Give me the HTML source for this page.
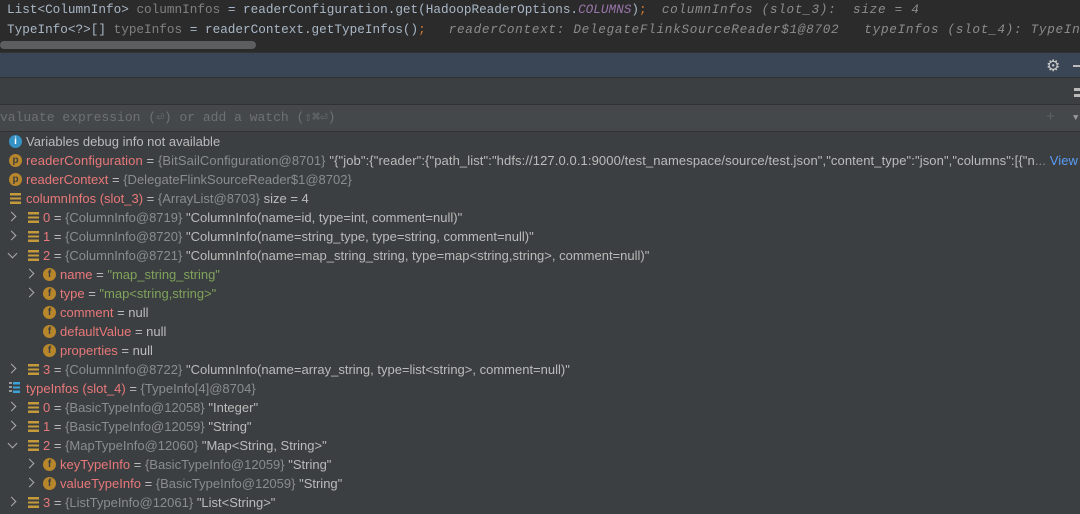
<!DOCTYPE html><html><head><style>
body{margin:0;width:1080px;height:514px;overflow:hidden;background:#3c3f41;font-family:"Liberation Sans",sans-serif;position:relative}
.code{position:absolute;left:0;top:0;width:1080px;height:52px;overflow:hidden;background:#2b2b2b;font-family:"Liberation Mono",monospace;font-size:12.7px;color:#a9b7c6;white-space:pre}
.code div{position:absolute;left:7px}
.g{color:#808080}.i{font-style:italic;color:#8c8c8c;letter-spacing:.7px}.o{color:#cc7832}.p{color:#9876aa;font-style:italic}
.r{position:absolute;height:19px;line-height:19px;font-size:13px;color:#bbbbbb;white-space:nowrap}
.n{color:#e8787a}.v{color:#8a8d90}.s2{color:#7fa35b}
.ic{position:absolute;width:13px;height:13px;border-radius:50%;background:#b8862b;color:#3c3f41;font-size:10px;line-height:13px;text-align:center;font-weight:bold}
.ls{position:absolute;width:11px;height:11px;background:repeating-linear-gradient(#c59a3a 0 2.4px,transparent 2.4px 4.3px)}
.ar{position:absolute;width:6px;height:6px;border-right:1.5px solid #aaa;border-bottom:1.5px solid #aaa;transform:rotate(-45deg)}
.dn{transform:rotate(45deg)}
</style></head><body>
<div class="code">
<div style="top:2px">List&lt;ColumnInfo&gt; <span class="g">columnInfos</span> = readerConfiguration.get(HadoopReaderOptions.<span class="p">COLUMNS</span>)<span class="o">;</span>  <span class="i">columnInfos (slot_3):  size = 4</span></div>
<div style="top:22px">TypeInfo&lt;?&gt;[] <span class="g">typeInfos</span> = readerContext.getTypeInfos()<span class="o">;</span>   <span class="i">readerContext: DelegateFlinkSourceReader$1@8702   typeInfos (slot_4): TypeInfo[4]@8704</span></div>
<div style="left:0;top:41px;width:256px;height:8px;border-radius:4px;background:#5c5e60"></div>
</div>
<div style="position:absolute;top:52px;left:0;width:1080px;height:1px;background:#323232"></div>
<div style="position:absolute;top:53px;left:0;width:1080px;height:24px;background:#3a4655"></div>
<div style="position:absolute;top:56px;left:1046px;color:#c8c8c8;font-size:16px">⚙</div>
<div style="position:absolute;top:65px;left:1073px;width:7px;height:2px;background:#bbb"></div>
<div style="position:absolute;top:77px;left:0;width:1080px;height:1px;background:#323232"></div>
<div style="position:absolute;top:88px;left:1074px;width:6px;height:3px;background:#bbb"></div>
<div style="position:absolute;top:94px;left:1074px;width:6px;height:3px;background:#bbb"></div>
<div style="position:absolute;top:104px;left:0;width:1080px;height:1px;background:#323232"></div>
<div style="position:absolute;top:105px;left:0;width:1080px;height:26px;overflow:hidden;background:#45484a;font-family:'Liberation Mono',monospace;font-size:13px;color:#6e7173;line-height:26px;white-space:pre">valuate expression (⏎) or add a watch (⇧⌘⏎)<span style="position:absolute;left:1046px;color:#5d6062;font-size:15px">+</span><span style="position:absolute;left:1073px;font-size:9px;color:#999">▼</span></div>
<div style="position:absolute;top:131px;left:0;width:1080px;height:1px;background:#323232"></div>

<div class="ic" style="left:9px;top:135px;background:#3592c4;color:#fff">i</div><div class="r" style="left:26px;top:132px">Variables debug info not available</div>
<div class="ic" style="left:9px;top:154px">p</div><div class="r" style="left:26px;top:151px;width:1054px;overflow:hidden;letter-spacing:.1px"><span class="n">readerConfiguration</span> = <span class="v">{BitSailConfiguration@8701}</span> "{"job":{"reader":{"path_list":"hdfs://127.0.0.1:9000/test_namespace/source/test.json","content_type":"json","columns":[{"n<span class="v">...</span> <span style="color:#589df6">View</span></div>
<div class="ic" style="left:9px;top:173px">p</div><div class="r" style="left:26px;top:170px"><span class="n">readerContext</span> = <span class="v">{DelegateFlinkSourceReader$1@8702}</span></div>
<div class="ls" style="left:10px;top:193px"></div><div class="r" style="left:26px;top:189px"><span class="n">columnInfos (slot_3)</span> = <span class="v">{ArrayList@8703}</span>  size = 4</div>

<div class="ar" style="left:8px;top:213px"></div><div class="ls" style="left:28px;top:212px"></div><div class="r" style="left:43px;top:208px"><span class="n">0</span> = <span class="v">{ColumnInfo@8719}</span> "ColumnInfo(name=id, type=int, comment=null)"</div>
<div class="ar" style="left:8px;top:232px"></div><div class="ls" style="left:28px;top:231px"></div><div class="r" style="left:43px;top:227px"><span class="n">1</span> = <span class="v">{ColumnInfo@8720}</span> "ColumnInfo(name=string_type, type=string, comment=null)"</div>
<div class="ar dn" style="left:9px;top:250px"></div><div class="ls" style="left:28px;top:250px"></div><div class="r" style="left:43px;top:246px"><span class="n">2</span> = <span class="v">{ColumnInfo@8721}</span> "ColumnInfo(name=map_string_string, type=map&lt;string,string&gt;, comment=null)"</div>
<div class="ar" style="left:26px;top:270px"></div><div class="ic" style="left:43px;top:268px">f</div><div class="r" style="left:60px;top:265px"><span class="n">name</span> = <span class="s2">"map_string_string"</span></div>
<div class="ar" style="left:26px;top:289px"></div><div class="ic" style="left:43px;top:287px">f</div><div class="r" style="left:60px;top:284px"><span class="n">type</span> = <span class="s2">"map&lt;string,string&gt;"</span></div>
<div class="ic" style="left:43px;top:306px">f</div><div class="r" style="left:60px;top:303px"><span class="n">comment</span> = null</div>
<div class="ic" style="left:43px;top:325px">f</div><div class="r" style="left:60px;top:322px"><span class="n">defaultValue</span> = null</div>
<div class="ic" style="left:43px;top:344px">f</div><div class="r" style="left:60px;top:341px"><span class="n">properties</span> = null</div>
<div class="ar" style="left:8px;top:365px"></div><div class="ls" style="left:28px;top:364px"></div><div class="r" style="left:43px;top:360px"><span class="n">3</span> = <span class="v">{ColumnInfo@8722}</span> "ColumnInfo(name=array_string, type=list&lt;string&gt;, comment=null)"</div>
<div style="position:absolute;left:9px;top:382px;width:3px;height:11px;background:repeating-linear-gradient(#999 0 2px,transparent 2px 4px)"></div><div style="position:absolute;left:13px;top:382px;width:7px;height:11px;background:repeating-linear-gradient(#3aa3d8 0 2.4px,transparent 2.4px 4.3px)"></div><div class="r" style="left:26px;top:379px"><span class="n">typeInfos (slot_4)</span> = <span class="v">{TypeInfo[4]@8704}</span></div>
<div class="ar" style="left:8px;top:403px"></div><div class="ls" style="left:28px;top:402px"></div><div class="r" style="left:43px;top:398px"><span class="n">0</span> = <span class="v">{BasicTypeInfo@12058}</span> "Integer"</div>
<div class="ar" style="left:8px;top:422px"></div><div class="ls" style="left:28px;top:421px"></div><div class="r" style="left:43px;top:417px"><span class="n">1</span> = <span class="v">{BasicTypeInfo@12059}</span> "String"</div>
<div class="ar dn" style="left:9px;top:440px"></div><div class="ls" style="left:28px;top:440px"></div><div class="r" style="left:43px;top:436px"><span class="n">2</span> = <span class="v">{MapTypeInfo@12060}</span> "Map&lt;String, String&gt;"</div>
<div class="ar" style="left:26px;top:460px"></div><div class="ic" style="left:43px;top:458px">f</div><div class="r" style="left:60px;top:455px"><span class="n">keyTypeInfo</span> = <span class="v">{BasicTypeInfo@12059}</span> "String"</div>
<div class="ar" style="left:26px;top:479px"></div><div class="ic" style="left:43px;top:477px">f</div><div class="r" style="left:60px;top:474px"><span class="n">valueTypeInfo</span> = <span class="v">{BasicTypeInfo@12059}</span> "String"</div>
<div class="ar" style="left:8px;top:498px"></div><div class="ls" style="left:28px;top:497px"></div><div class="r" style="left:43px;top:493px"><span class="n">3</span> = <span class="v">{ListTypeInfo@12061}</span> "List&lt;String&gt;"</div>
</body></html>
